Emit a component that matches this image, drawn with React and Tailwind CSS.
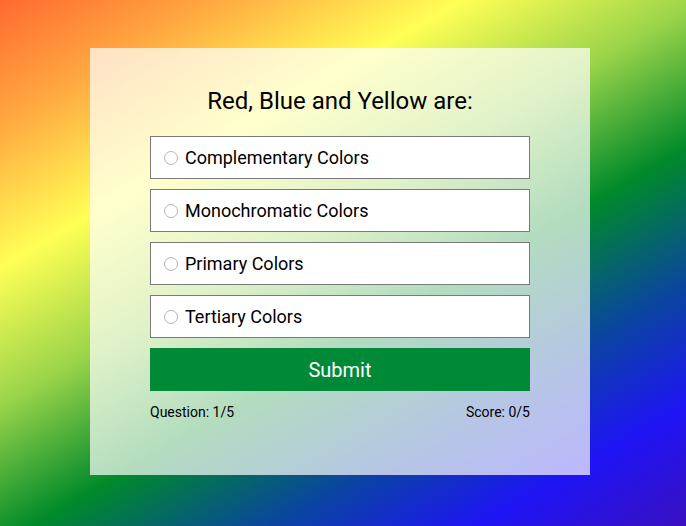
const OPTIONS = [
  'Complementary Colors',
  'Monochromatic Colors',
  'Primary Colors',
  'Tertiary Colors',
];

function Option({ label }) {
  return (
    <label className="flex items-center h-[43px] border border-[#7a7a7a] bg-white pl-[13px] text-[18px] text-black cursor-pointer">
      <span className="w-[14px] h-[14px] rounded-full border border-[#b5b5b5] bg-white shrink-0" />
      <span className="ml-[7px]">{label}</span>
    </label>
  );
}

export default function App() {
  return (
    <div
      className="w-full min-h-[526px] pt-12 pb-[51px] bg-[linear-gradient(150deg,#ff6a30_0%,#ffa640_13%,#ffff55_29%,#9ad44a_44%,#008a2a_59%,#0a45a0_74%,#1e14f5_87%,#3a10c0_100%)]"
      style={{ fontFamily: 'Roboto, "Liberation Sans", sans-serif' }}
    >
      <div className="ml-[90px] w-[500px] h-[427px] bg-white/70 px-[60px] pt-[39px]">
        <h2 className="text-[24px] leading-[28px] text-center text-black mb-[21px]">
          Red, Blue and Yellow are:
        </h2>
        <div className="flex flex-col gap-[10px]">
          {OPTIONS.map(o => (
            <Option key={o} label={o} />
          ))}
          <button className="h-[43px] w-full bg-[#008a38] text-white text-[20px]">
            Submit
          </button>
        </div>
        <div className="flex justify-between mt-[11px] text-[14px] leading-[21px] text-black">
          <span>Question: 1/5</span>
          <span>Score: 0/5</span>
        </div>
      </div>
    </div>
  );
}
